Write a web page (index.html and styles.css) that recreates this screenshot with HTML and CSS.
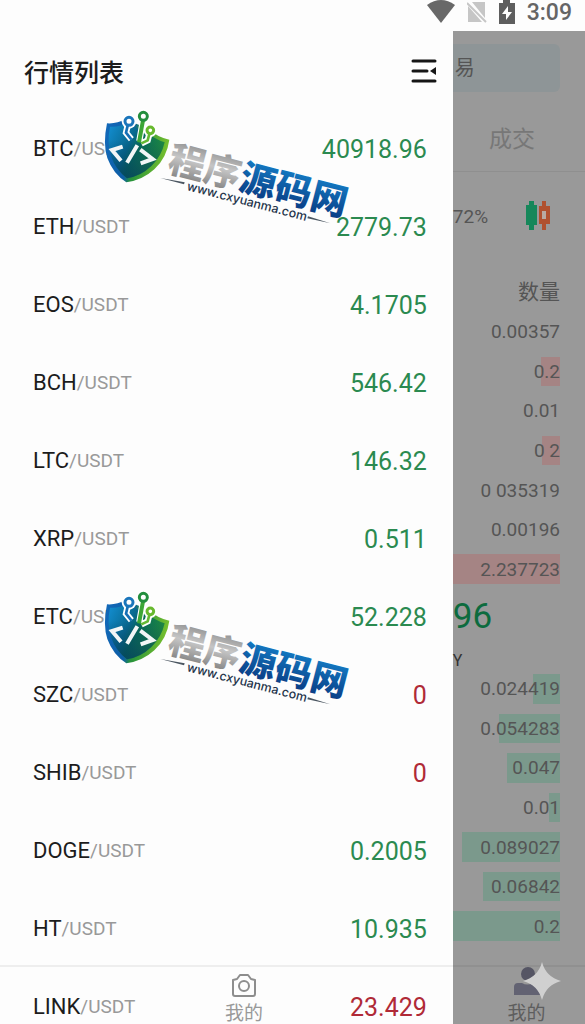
FILE: index.html
```html
<!DOCTYPE html>
<html lang="zh-CN">
<head>
<meta charset="UTF-8" />
<meta name="viewport" content="width=device-width, initial-scale=1.0" />
<title>行情列表</title>
<link rel="stylesheet" href="styles.css">
</head>
<body>
<header class="status-bar">
  <svg class="wifi" width="28" height="23" viewBox="0 0 28 23"><path d="M0 5Q14-5 28 5L14 23Z" fill="#686868"/></svg>
  <svg class="sim" width="20" height="23" viewBox="0 0 20 23"><path d="M5 2h13v16zM1 6l14 16H1z" fill="#c6c6c6"/><path d="M0 3l19 19" stroke="#c6c6c6" stroke-width="2"/></svg>
  <svg class="battery" width="16" height="24" viewBox="0 0 16 24"><path d="M4 0h7v3h5v21H0V3h4z" fill="#5e5e5e"/><path d="M9 6L3 14h4v6l6-8H9z" fill="#fff"/></svg>
  <time>3:09</time>
</header>

<div class="stage">
  <aside class="drawer" aria-label="行情列表">
    <div class="drawer-head">
      <h1>行情列表</h1>
      <button type="button" class="menu-btn" aria-label="收起">
        <svg width="26" height="26" viewBox="0 0 26 26"><path d="M2 3h22M2 13h14M2 23h22" stroke="#151515" stroke-width="3" stroke-linecap="round"/><path d="M25 9v8l-6-4z" fill="#151515"/></svg>
      </button>
    </div>
    <ul class="pairs">
      <li><a href="#btc"><span class="pair">BTC<small>/USDT</small></span><span class="price">40918.96</span></a></li>
      <li><a href="#eth"><span class="pair">ETH<small>/USDT</small></span><span class="price">2779.73</span></a></li>
      <li><a href="#eos"><span class="pair">EOS<small>/USDT</small></span><span class="price">4.1705</span></a></li>
      <li><a href="#bch"><span class="pair">BCH<small>/USDT</small></span><span class="price">546.42</span></a></li>
      <li><a href="#ltc"><span class="pair">LTC<small>/USDT</small></span><span class="price">146.32</span></a></li>
      <li><a href="#xrp"><span class="pair">XRP<small>/USDT</small></span><span class="price">0.511</span></a></li>
      <li><a href="#etc"><span class="pair">ETC<small>/USDT</small></span><span class="price">52.228</span></a></li>
      <li><a href="#szc"><span class="pair">SZC<small>/USDT</small></span><span class="price down">0</span></a></li>
      <li><a href="#shib"><span class="pair">SHIB<small>/USDT</small></span><span class="price down">0</span></a></li>
      <li><a href="#doge"><span class="pair">DOGE<small>/USDT</small></span><span class="price">0.2005</span></a></li>
      <li><a href="#ht"><span class="pair">HT<small>/USDT</small></span><span class="price">10.935</span></a></li>
      <li><a href="#link"><span class="pair">LINK<small>/USDT</small></span><span class="price down">23.429</span></a></li>
    </ul>
  </aside>

  <main class="trade">
    <div class="switch">易</div>
    <div class="deal-tab">成交</div>
    <div class="change">
      <span>72%</span>
      <svg width="26" height="30" viewBox="0 0 26 30"><path d="M4 0h5v4h3v20H9v5H4v-5H1V4h3z" fill="#16875a"/><path d="M17 0h4v5h4v18h-4v6h-4v-6h-3V5h3z" fill="#b0512f"/><path d="M17 10h4v8h-4z" fill="#b9aaa2"/></svg>
    </div>
    <div class="amount-title">数量</div>
    <ol class="book asks">
      <li>0.00357</li>
      <li><i style="width:18%"></i>0.2</li>
      <li>0.01</li>
      <li><i style="width:17%"></i>0 2</li>
      <li>0 035319</li>
      <li>0.00196</li>
      <li><i style="width:100%"></i>2.237723</li>
    </ol>
    <div class="last">
      <strong>96</strong>
      <span>Y</span>
    </div>
    <ol class="book bids">
      <li><i style="width:25%"></i>0.024419</li>
      <li><i style="width:57%"></i>0.054283</li>
      <li><i style="width:49%"></i>0.047</li>
      <li><i style="width:10%"></i>0.01</li>
      <li><i style="width:91%"></i>0.089027</li>
      <li><i style="width:72%"></i>0.06842</li>
      <li><i style="width:100%"></i>0.2</li>
    </ol>
  </main>
</div>

<nav class="tab-bar">
  <a href="#photo">
    <svg width="24" height="25" viewBox="0 0 24 25" fill="none" stroke="#8d8d8d" stroke-width="2"><path d="M1 7l4-1 3-4h8l3 4 4 1v14q0 2-2 2H3q-2 0-2-2z" stroke-linejoin="round"/><circle cx="12" cy="13" r="5"/></svg>
    我的
  </a>
  <a href="#mine" class="mine">
    <svg width="26" height="28" viewBox="0 0 26 28"><circle cx="14" cy="7" r="7" fill="#555564"/><path d="M0 28v-8q0-4 4-4h4q5 3 11 0h3q4 0 4 4v8z" fill="#626272"/></svg>
    我的
  </a>
</nav>
<svg class="sparkle" width="38" height="38" viewBox="0 0 38 38"><path d="M19 0Q23 15 38 19Q23 23 19 38Q15 23 0 19Q15 15 19 0Z" fill="#d0d0d0"/></svg>

<svg class="brand" width="270" height="135" viewBox="0 0 810 405">
  <defs>
    <linearGradient id="rim" x1="0" y1="0.3" x2="1" y2="0.5"><stop offset="0" stop-color="#1268b8"/><stop offset="0.4" stop-color="#0d5da4"/><stop offset="0.5" stop-color="#24913c"/><stop offset="1" stop-color="#7cc22c"/></linearGradient>
    <linearGradient id="face" x1="0" y1="0" x2="1" y2="0.5"><stop offset="0" stop-color="#138fd4"/><stop offset="0.45" stop-color="#08678c"/><stop offset="0.6" stop-color="#086b59"/><stop offset="1" stop-color="#23903c"/></linearGradient>
    <linearGradient id="shade" x1="0" y1="0" x2="0" y2="1"><stop offset="0.3" stop-color="#043a60" stop-opacity="0"/><stop offset="1" stop-color="#043a60" stop-opacity="0.7"/></linearGradient>
    <linearGradient id="silver" x1="0" y1="0" x2="0" y2="1"><stop offset="0.1" stop-color="#858585"/><stop offset="0.5" stop-color="#c6c6c6"/><stop offset="0.9" stop-color="#838383"/></linearGradient>
    <linearGradient id="ocean" x1="0" y1="0" x2="0" y2="1"><stop offset="0.1" stop-color="#1583cc"/><stop offset="0.85" stop-color="#0a3f87"/></linearGradient>
    <g id="logo">
      <path d="M36 70Q66 72 90 58L155 84Q190 113 223 119Q216 172 178 208Q142 241 94 247Q54 221 37 174Q23 132 36 70Z" fill="url(#rim)"/>
      <path d="M45 80Q73 82 94 70L153 96Q182 119 209 127Q200 168 169 198Q138 228 96 235Q62 209 48 169Q35 128 45 80Z" fill="url(#face)"/>
      <path d="M45 80Q73 82 94 70L153 96Q182 119 209 127Q200 168 169 198Q138 228 96 235Q62 209 48 169Q35 128 45 80Z" fill="url(#shade)"/>
      <g fill="none" stroke="#fff" stroke-width="19">
        <path d="M98 77l-5 21 16 20M144 61l-11 62M163 102l-5 19-19 9"/>
      </g>
      <g fill="#fff"><circle cx="102" cy="64" r="22"/><circle cx="145" cy="49" r="21"/><circle cx="166" cy="91" r="20"/></g>
      <g fill="none" stroke-width="8">
        <path d="M98 77l-5 21 16 20" stroke="#1670b6"/>
        <path d="M144 61l-12 66" stroke="#3ca636" stroke-width="12"/>
        <path d="M163 102l-5 19-19 9" stroke="#64b934"/>
      </g>
      <g fill="#fff" stroke-width="9"><circle cx="102" cy="64" r="12" stroke="#1b76bb"/><circle cx="145" cy="49" r="12" stroke="#238e3d"/><circle cx="166" cy="91" r="10" stroke="#68b92e"/></g>
      <path d="M83 140l-32 10 27 32M127 136L96 188M136 149l37 28-36 13" fill="none" stroke="#f3f6f6" stroke-width="12"/>
      <g transform="translate(214 212) rotate(14.5)">
        <text class="brand-name" x="0" y="0"><tspan fill="url(#silver)">程序</tspan><tspan fill="url(#ocean)">源码网</tspan></text>
      </g>
      <g transform="translate(274 270) rotate(14.5)">
        <text class="brand-url" x="0" y="0">www.cxyuanma.com</text>
      </g>
      <path d="M196 234L269 247L267 253Z" fill="#4b5661"/>
      <path d="M639 349L706 370L637 355Z" fill="#4b5661"/>
    </g>
  </defs>
  <use href="#logo"/>
</svg>
<svg class="brand brand-low" width="270" height="135" viewBox="0 0 810 405"><use href="#logo"/></svg>
</body>
</html>
```
FILE: styles.css
```css
* {
  box-sizing: border-box;
}
body {
  margin: 0;
  height: 100vh;
  display: flex;
  flex-direction: column;
  position: relative;
  overflow: hidden;
  background: #fdfdfd;
  color: #1c1c1c;
  font-family: Roboto, "Noto Sans CJK SC", sans-serif;
}
a {
  color: inherit;
  text-decoration: none;
}
ul, ol {
  list-style: none;
  margin: 0;
  padding: 0;
}
svg {
  display: block;
  flex-shrink: 0;
}

/* Status bar */
.status-bar {
  flex: 0 0 31px;
  display: flex;
  justify-content: flex-end;
  gap: 12px;
  padding-right: 13px;
  color: #656565;
  font-size: 23px;
  font-weight: 500;
  line-height: 26px;
}

.stage {
  flex: 1;
  min-height: 0;
  display: flex;
}

/* Drawer */
.drawer {
  flex: 0 0 77.4%;
  background: #fdfdfd;
}
.drawer-head {
  height: 79px;
  display: flex;
  align-items: center;
  justify-content: space-between;
  padding: 0 16px 0 24px;
}
.drawer-head h1 {
  margin: 0;
  font-size: 25px;
  font-weight: 500;
}
.menu-btn {
  padding: 0;
  border: none;
  background: none;
  cursor: pointer;
}
.pairs a {
  height: 78px;
  display: flex;
  align-items: center;
  justify-content: space-between;
  padding: 0 26px 0 33px;
}
.pair {
  display: flex;
  align-items: center;
  font-size: 22px;
  line-height: 28px;
}
.pair small {
  font-size: 19px;
  line-height: 24px;
  color: #999;
}
.price {
  font-size: 25px;
  color: #2b8a50;
}
.price.down {
  color: #b02a37;
}

/* Dimmed trade page */
.trade {
  flex: 1;
  min-width: 0;
  padding: 13px 25px 0 0;
  background: #999;
  color: #555;
  font-size: 19px;
}
.switch {
  height: 48px;
  padding-left: 2px;
  border-radius: 0 6px 6px 0;
  background: #8e9597;
  font-size: 20px;
  line-height: 48px;
}
.deal-tab {
  height: 80px;
  margin-right: -25px;
  padding: 0 50px 0 0;
  border-bottom: 1px solid #8f8f8f;
  color: #777;
  font-size: 23px;
  line-height: 96px;
  text-align: right;
}
.change {
  height: 88px;
  display: flex;
  align-items: center;
  justify-content: space-between;
  padding-right: 9px;
}
.amount-title {
  height: 52px;
  font-size: 21px;
  line-height: 64px;
  text-align: right;
}
.book {
  height: 277px;
  display: grid;
  grid-template-rows: repeat(7, 1fr);
  text-align: right;
}
.book li {
  position: relative;
  display: flex;
  align-items: center;
  justify-content: flex-end;
  z-index: 0;
}
.book i {
  position: absolute;
  top: 5px;
  right: 0;
  bottom: 5px;
  z-index: -1;
}
.asks i {
  background: #a58484;
}
.bids i {
  background: #7b998c;
}
.last {
  height: 80px;
  padding-top: 6px;
}
.last strong {
  display: block;
  color: #0c6b3e;
  font-size: 35px;
  font-weight: 400;
  line-height: 44px;
}
.last span {
  display: block;
  color: #333;
  font-size: 16px;
  line-height: 44px;
}

/* Bottom tabs, laid over both the drawer and the page */
.tab-bar {
  position: absolute;
  left: 0;
  right: 0;
  bottom: 0;
  height: 59px;
  display: grid;
  grid-template-columns: 1fr 77px;
  padding-right: 20px;
  border-top: 2px solid rgba(0, 0, 0, 0.06);
  pointer-events: none;
}
.tab-bar a {
  display: flex;
  flex-direction: column;
  align-items: center;
  justify-content: flex-end;
  color: #999;
  font-size: 19px;
  line-height: 20px;
  gap: 6px;
}
.tab-bar .mine {
  color: #5e5e5e;
  gap: 9px;
}
.sparkle {
  position: absolute;
  right: 24px;
  bottom: 24px;
}

/* Watermark */
.brand {
  position: absolute;
  top: 100px;
  left: 95px;
  overflow: visible;
  pointer-events: none;
}
.brand-low {
  top: 581px;
}
.brand-name {
  font-family: "Noto Sans CJK SC", sans-serif;
  font-size: 110px;
  font-weight: 900;
}
.brand-url {
  font-family: Inter, sans-serif;
  font-size: 37px;
  font-weight: 500;
  fill: #24344a;
}
```
